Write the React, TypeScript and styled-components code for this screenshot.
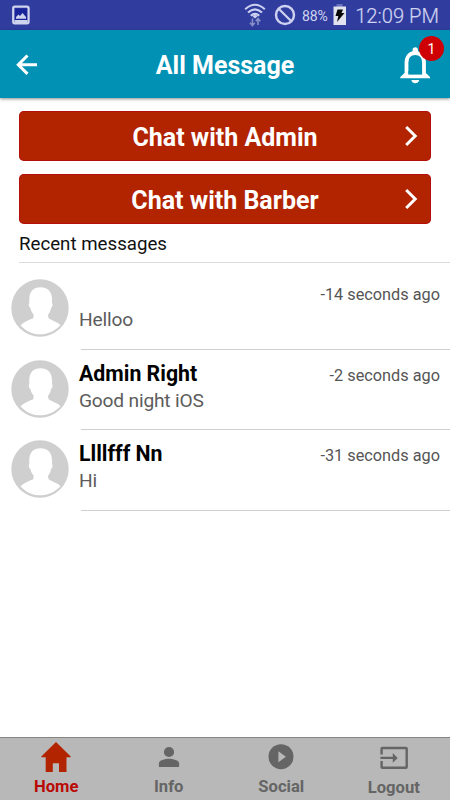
import React from "react";
import styled, { createGlobalStyle } from "styled-components";

const GlobalStyle = createGlobalStyle`
  *, *::before, *::after { box-sizing: border-box; }
  html, body { margin: 0; padding: 0; background: #fff; }
  body { font-family: Roboto, "Noto Sans", sans-serif; }
  button { font: inherit; border: 0; margin: 0; padding: 0; background: none; cursor: pointer; }
`;

const Screen = styled.div`
  width: 450px;
  height: 800px;
  display: flex;
  flex-direction: column;
  overflow: hidden;
  background: #fff;
`;

const StatusBar = styled.div`
  flex: none;
  height: 30px;
  padding: 0 11px 0 12px;
  display: flex;
  align-items: center;
  background: #303d9f;
  color: #d0d4f0;
  svg { display: block; flex: none; }
`;

const StatusSpacer = styled.div`
  flex: 1;
`;

const SystemIcons = styled.div`
  display: flex;
  align-items: center;
  gap: 8px;
`;

const BatteryLevel = styled.span`
  width: 37px;
  padding-left: 6px;
  font-size: 14px;
  letter-spacing: -0.1px;
  line-height: 30px;
  white-space: nowrap;
  margin-top: 2px;
`;

const Clock = styled.span`
  width: 92px;
  font-size: 20.2px;
  font-weight: 300;
  line-height: 30px;
  text-align: right;
  white-space: nowrap;
  margin-top: 2px;
  -webkit-text-stroke: 0.2px #d0d4f0;
`;

const AppBar = styled.header`
  flex: none;
  height: 68px;
  display: grid;
  grid-template-columns: 70px 1fr 70px;
  align-items: center;
  background: #0091b5;
  box-shadow: 0 1px 3px rgba(0, 0, 0, 0.45);
  z-index: 1;
`;

const BackButton = styled.button`
  width: 70px;
  height: 68px;
  padding: 24px 0 0 16px;
  display: flex;
  svg { display: block; }
`;

const Title = styled.h1`
  margin: 0;
  padding-top: 3px;
  color: #fff;
  font-size: 25px;
  line-height: 30px;
  font-weight: 700;
  text-align: center;
  white-space: nowrap;
`;

const BellButton = styled.button`
  position: relative;
  width: 70px;
  height: 68px;
  padding: 17px 0 0 20px;
  display: flex;
  svg { display: block; }
`;

const Badge = styled.span`
  position: absolute;
  left: 39px;
  top: 6px;
  width: 25px;
  height: 25px;
  border-radius: 50%;
  background: #cf0003;
  color: #fff;
  font-size: 14px;
  line-height: 26px;
  text-align: center;
`;

const Main = styled.main`
  flex: 1;
  min-height: 0;
`;

const ChatActions = styled.div`
  padding: 13px 19px 0;
  display: grid;
  gap: 13px;
`;

const ChatButton = styled.button`
  height: 50px;
  padding: 3px 12px 0 48px;
  display: grid;
  grid-template-columns: 1fr 14px;
  align-items: center;
  border-radius: 5px;
  background: #b22300;
  box-shadow: inset 0 0 0 1px rgba(184, 0, 18, 0.6);
  color: #fff;
  font-size: 25px;
  line-height: 30px;
  font-weight: 700;
  text-align: center;
  svg { display: block; margin-top: -4px; }
`;

const ChatLabel = styled.span`
  padding-right: 22px;
  white-space: nowrap;
`;

const SectionTitle = styled.h2`
  margin: 0 0 0 19px;
  height: 39px;
  border-bottom: 1px solid #dcdcdc;
  color: #111;
  font-size: 18.7px;
  line-height: 41px;
  font-weight: 400;
`;

const MessageList = styled.ul`
  list-style: none;
  margin: 0;
  padding: 6px 0 0;
`;

const MessageRow = styled.li`
  height: 80.5px;
  padding-left: 11px;
  display: flex;
  svg { display: block; flex: none; margin-top: 10.4px; }
`;

const MessageBody = styled.div`
  flex: 1;
  margin-left: 12px;
  display: flex;
  flex-direction: column;
  border-bottom: 1px solid #cfcfcf;
`;

const MessageTop = styled.div`
  height: 36px;
  padding: 10px 10px 0 0;
  display: flex;
  justify-content: space-between;
  margin-left: -2px;
  line-height: 28px;
`;

const Sender = styled.span`
  color: #000;
  font-size: 21.3px;
  font-weight: 700;
`;

const Time = styled.time`
  padding-top: 2px;
  color: #555;
  font-size: 16.3px;
`;

const Preview = styled.p`
  margin: 0 0 0 -2px;
  color: #5c5c5c;
  font-size: 19.2px;
  letter-spacing: -0.2px;
  line-height: 29px;
`;

const Tab = styled.button<{ $active?: boolean; $drop?: number }>`
  display: flex;
  flex-direction: column;
  align-items: center;
  color: ${(p) => (p.$active ? "#b90a04" : "#656565")};
  font-size: 16.6px;
  font-weight: 700;
  svg { display: block; flex: none; }
  span { line-height: 20px; margin-top: ${(p) => (p.$drop ?? 0) - 1}px; }
`;

const TabBar = styled.nav`
  flex: none;
  height: 63px;
  border-top: 1px solid #858585;
  display: grid;
  grid-template-columns: repeat(4, 1fr);
  background: #b8b8b8;
`;

const Avatar = () => (
  <svg width="58" height="58" viewBox="0 0 58 58">
    <circle cx="29" cy="29" r="28.7" fill="#cfcfcf" />
    <path
      fill="#fff"
      d="M29.500 8.200C22.500 8.200 18.300 12.500 18.300 20V24C17.400 24.800 17.600 27.500 19.300 29C20 32 21.200 34 22.600 35.500C22.800 37 22.500 38.500 21.800 39.600C18.500 41 13.500 42.500 9.500 46.200C14.500 52 21.500 55.300 29 55.300C36.500 55.300 44 52 49.500 46.200C45.500 42.500 40.800 41.500 38 39.600C37.200 38.500 37 37 37.200 35.500C38.600 34 39.500 32 40.100 29C41.800 27.500 42 24.800 41 24V20C41 12.500 36.500 8.200 29.500 8.200Z"
    />
  </svg>
);

const Chevron = () => (
  <svg width="14" height="22" viewBox="0 0 14 22">
    <path d="M1.200 2L10.200 11L1.200 20" fill="none" stroke="#fff" strokeWidth="3" />
  </svg>
);

const PictureIcon = () => (
  <svg width="18" height="20" viewBox="0 0 18 20">
    <rect x="1.200" y="1.700" width="15.400" height="16.600" rx="1.500" fill="none" stroke="#d0d3ed" strokeWidth="2.200" />
    <rect x="3" y="3.500" width="12" height="11.500" fill="#1a249a" />
    <path d="M4 13.800V12L6.500 9.500L8 11L10.500 8L14 12V13.800ZM2.500 15H15.500V18H2.500Z" fill="#d0d3ed" />
  </svg>
);

const WifiIcon = () => (
  <svg width="22" height="24" viewBox="0 0 22 24">
    <g fill="none" stroke="#ced2f0" strokeWidth="2.100">
      <path d="M1.200 6.200Q11 -2.700 20.800 6.200" />
      <path d="M4 9.600Q11 3 18 9.600" />
      <path d="M6.800 12.800Q11 8.800 15.200 12.800" />
    </g>
    <path d="M8.500 13.300Q11 10.800 13.500 13.300L11 15.500Z" fill="#ced2f0" />
    <path d="M8.400 15.500V22M6 19.800L8.400 22.500L10.800 19.800M14 22V15.500M11.800 18.200L14 15.500L16.300 18.200" fill="none" stroke="#8990c8" strokeWidth="1.600" />
  </svg>
);

const BlockedIcon = () => (
  <svg width="22" height="22" viewBox="0 0 22 22">
    <circle cx="11" cy="11" r="9" fill="none" stroke="#ced2f0" strokeWidth="2.400" />
    <path d="M4.700 4.700L17.300 17.300" stroke="#ced2f0" strokeWidth="2.200" />
  </svg>
);

const BatteryIcon = () => (
  <svg width="14" height="22" viewBox="0 0 14 22">
    <path d="M3.500 0H9.500V3H3.500Z" fill="#6872bd" />
    <rect x="0.500" y="2.500" width="12.500" height="18.500" fill="#e2e3f1" />
    <path d="M4.500 5.500H10L8.500 9H11.500L4 18L5.300 12H2.500Z" fill="#080808" />
  </svg>
);

const BackIcon = () => (
  <svg width="22" height="22" viewBox="0 0 22 22">
    <path d="M21 10.700H3M11.500 1.500L2.300 10.700L11.500 19.900" fill="none" stroke="#fff" strokeWidth="3" />
  </svg>
);

const BellIcon = () => (
  <svg width="31" height="37" viewBox="0 0 31 37">
    <path d="M6.500 29V15.500C6.500 9.500 10 6 15.200 6C20.500 6 24 9.500 24 15.500V29" fill="none" stroke="#fff" strokeWidth="3.800" />
    <path d="M12.600 5V3A2.600 2.600 0 0 1 17.900 3V5ZM4.600 26H25.900L30 30V31.200H.3V30ZM11.300 33H19.300Q18.300 36.300 15.300 36.300Q12.300 36.300 11.300 33Z" fill="#fff" />
    <rect x="8.300" y="24" width="13.800" height="3.600" fill="#0091b5" />
  </svg>
);

const HomeIcon = () => (
  <svg width="30" height="40" viewBox="0 0 30 40">
    <path d="M15 4L29.700 18.500V19.200H25.500V34H18V25.300H11.800V34H4.700V19.200H.3V18.500Z" fill="#b22300" />
  </svg>
);

const PersonIcon = () => (
  <svg width="22" height="40" viewBox="0 0 22 40">
    <circle cx="11" cy="14" r="5.100" fill="#656565" />
    <path d="M.9 29V25.500C.9 22.300 7 20.800 11 20.800S21.100 22.300 21.100 25.500V29Z" fill="#656565" />
  </svg>
);

const PlayIcon = () => (
  <svg width="26" height="40" viewBox="0 0 26 40">
    <circle cx="13" cy="18.700" r="12.500" fill="#656565" />
    <path d="M10.400 13.200V24.300L17.900 18.700Z" fill="#b8b8b8" />
  </svg>
);

const LogoutIcon = () => (
  <svg width="28" height="40" viewBox="0 0 28 40">
    <path d="M1.600 16.500V10.500Q1.600 10 2.300 10H26Q26.700 10 26.700 10.700V29Q26.700 29.800 26 29.800H2.300Q1.600 29.800 1.600 29.200V23" fill="none" stroke="#656565" strokeWidth="2.400" />
    <path d="M.4 18.800H12.800V15L17.700 19.900L12.800 24.800V21H.4Z" fill="#656565" />
  </svg>
);

const actions = ["Chat with Admin", "Chat with Barber"];

const messages = [
  { sender: "", text: "Helloo", time: "-14 seconds ago" },
  { sender: "Admin Right", text: "Good night iOS", time: "-2 seconds ago" },
  { sender: "Llllfff Nn", text: "Hi", time: "-31 seconds ago" },
];

export default function App() {
  return (
    <>
      <GlobalStyle />
      <Screen>
        <StatusBar>
          <PictureIcon />
          <StatusSpacer />
          <SystemIcons>
            <WifiIcon />
            <BlockedIcon />
          </SystemIcons>
          <BatteryLevel>88%</BatteryLevel>
          <BatteryIcon />
          <Clock>12:09 PM</Clock>
        </StatusBar>
        <AppBar>
          <BackButton aria-label="Back">
            <BackIcon />
          </BackButton>
          <Title>All Message</Title>
          <BellButton aria-label="Notifications">
            <BellIcon />
            <Badge>1</Badge>
          </BellButton>
        </AppBar>
        <Main>
          <ChatActions>
            {actions.map((label) => (
              <ChatButton key={label}>
                <ChatLabel>{label}</ChatLabel>
                <Chevron />
              </ChatButton>
            ))}
          </ChatActions>
          <SectionTitle>Recent messages</SectionTitle>
          <MessageList>
            {messages.map((m) => (
              <MessageRow key={m.time}>
                <Avatar />
                <MessageBody>
                  <MessageTop>
                    <Sender>{m.sender}</Sender>
                    <Time>{m.time}</Time>
                  </MessageTop>
                  <Preview>{m.text}</Preview>
                </MessageBody>
              </MessageRow>
            ))}
          </MessageList>
        </Main>
        <TabBar>
          <Tab $active>
            <HomeIcon />
            <span>Home</span>
          </Tab>
          <Tab>
            <PersonIcon />
            <span>Info</span>
          </Tab>
          <Tab>
            <PlayIcon />
            <span>Social</span>
          </Tab>
          <Tab $drop={1}>
            <LogoutIcon />
            <span>Logout</span>
          </Tab>
        </TabBar>
      </Screen>
    </>
  );
}
